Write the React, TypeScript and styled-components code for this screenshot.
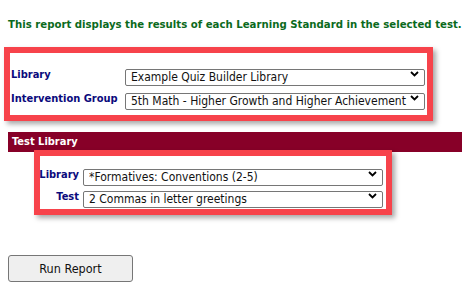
import React from 'react';
import styled, { createGlobalStyle } from 'styled-components';

const GlobalStyle = createGlobalStyle`
    body {
        margin: 0;
        background: #ffffff;
        font-family: "DejaVu Sans Condensed", "Liberation Sans", sans-serif;
    }
`;

const Page = styled.div`
    padding-left: 8px;
    width: 454px;
`;

const Intro = styled.p`
    margin: 18px 0 0;
    color: #0b6a1c;
    font-size: 11.3px;
    font-weight: bold;
    line-height: 13px;
    white-space: nowrap;
`;

const Callout = styled.div<{ $left: number; $width: number; $top: number }>`
    margin-top: ${props => props.$top}px;
    margin-left: ${props => props.$left}px;
    width: ${props => props.$width}px;
    box-sizing: border-box;
    border: 6px solid #f7434b;
    box-shadow: 3px 3px 5px rgba(0, 0, 0, 0.35);
    position: relative;
    background: #ffffff;
`;

const FieldGrid = styled.div<{ $labelCol: number; $gap: number; $align: string; $pad: string }>`
    display: grid;
    grid-template-columns: ${props => props.$labelCol}px 300px;
    column-gap: ${props => props.$align === 'end' ? 4 : 0}px;
    row-gap: ${props => props.$gap}px;
    align-items: center;
    justify-items: ${props => props.$align};
    padding: ${props => props.$pad};
`;

const Label = styled.label`
    color: #0a0a7c;
    font-size: 11px;
    font-weight: bold;
    white-space: nowrap;
`;

const SelectWrap = styled.div`
    position: relative;
    width: 300px;
    height: 17px;
    justify-self: start;
`;

const Select = styled.select`
    appearance: none;
    -webkit-appearance: none;
    width: 300px;
    height: 17px;
    box-sizing: border-box;
    margin: 0;
    padding: 0 0 0 5px;
    border: 1px solid #767676;
    border-radius: 2px;
    background: #ffffff;
    color: #111111;
    font-family: inherit;
    font-size: 12px;
    line-height: 15px;
    outline: none;
`;

const Chevron = styled.svg`
    position: absolute;
    right: 6px;
    top: 5px;
    pointer-events: none;
`;

const SectionBar = styled.div`
    margin-top: 11px;
    height: 20px;
    background: #870028;
    color: #ffffff;
    font-size: 11px;
    font-weight: bold;
    line-height: 20px;
    padding-left: 4px;
`;

const RunButton = styled.button`
    display: block;
    margin-top: 40px;
    width: 125px;
    height: 27px;
    background: #efefef;
    border: 1px solid #767676;
    border-radius: 3px;
    color: #111111;
    font-family: inherit;
    font-size: 12.5px;
    padding: 0;
`;

function Dropdown({ value }: { value: string }) {
    return (
        <SelectWrap>
            <Select defaultValue={value}>
                <option>{value}</option>
            </Select>
            <Chevron width="9" height="6" viewBox="0 0 9 6">
                <path d="M1 1 L4.5 4.5 L8 1" fill="none" stroke="#000" strokeWidth="1.8" />
            </Chevron>
        </SelectWrap>
    );
}

export default function App() {
    return (
        <Page>
            <GlobalStyle />
            <Intro>This report displays the results of each Learning Standard in the selected test.</Intro>
            <Callout $top={16} $left={-4} $width={429}>
                <FieldGrid $labelCol={114} $gap={7} $align="start" $pad="13px 2px 8px 1px">
                    <Label>Library</Label>
                    <Dropdown value="Example Quiz Builder Library" />
                    <Label>Intervention Group</Label>
                    <Dropdown value="5th Math - Higher Growth and Higher Achievement" />
                </FieldGrid>
            </Callout>
            <SectionBar>Test Library</SectionBar>
            <Callout $top={-2} $left={26} $width={358}>
                <FieldGrid $labelCol={39} $gap={5} $align="end" $pad="10px 3px 4px 0">
                    <Label>Library</Label>
                    <Dropdown value="*Formatives: Conventions (2-5)" />
                    <Label>Test</Label>
                    <Dropdown value="2 Commas in letter greetings" />
                </FieldGrid>
            </Callout>
            <RunButton>Run Report</RunButton>
        </Page>
    );
}
